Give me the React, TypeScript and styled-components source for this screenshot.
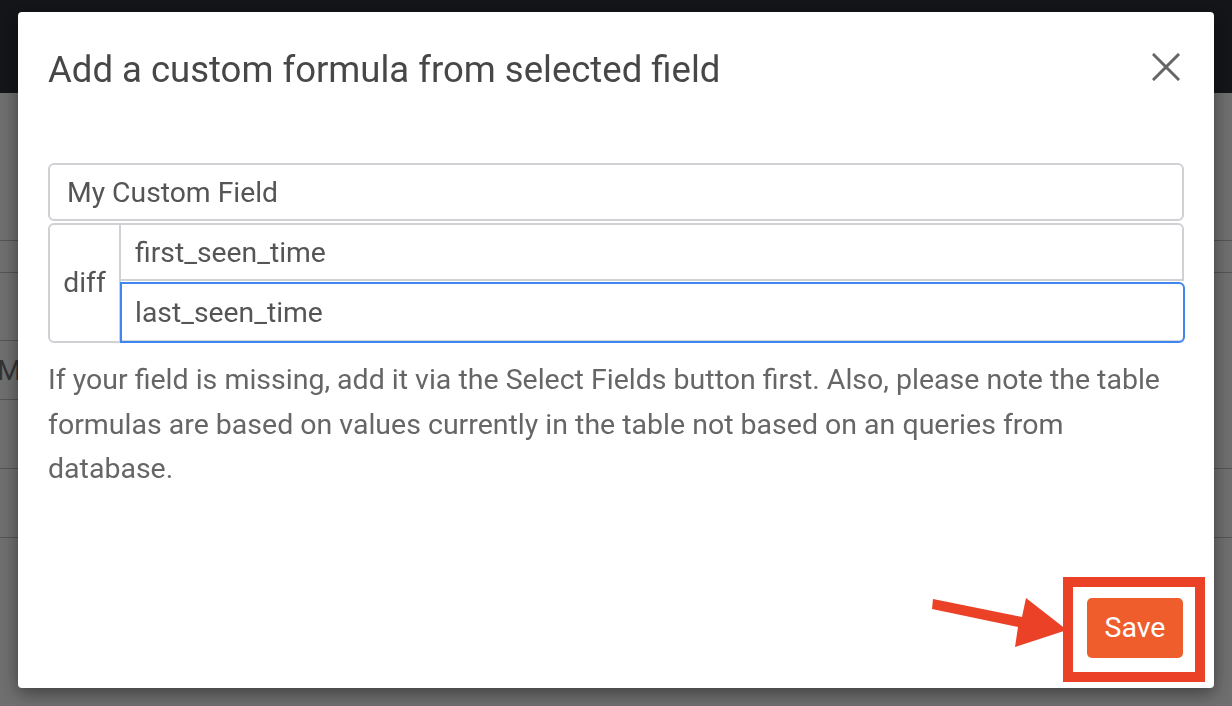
import React from 'react';
import styled, { createGlobalStyle } from 'styled-components';

const GlobalStyle = createGlobalStyle`
  html, body {
    margin: 0;
    padding: 0;
    width: 100%;
    height: 100%;
    overflow: hidden;
    font-family: Roboto, 'Liberation Sans', Arial, sans-serif;
    background: #dedede;
  }
  * { box-sizing: border-box; }
`;

const Page = styled.div`
  width: 1232px;
  height: 706px;
  display: flex;
  flex-direction: column;
  background: #dfdfdf;
`;

const NavBar = styled.div`
  height: 93px;
  background: #272b31;
  flex-shrink: 0;
`;

const TableArea = styled.div`
  padding-top: 147px;
  display: flex;
  flex-direction: column;
`;

const TableRow = styled.div<{ h: number; full?: boolean }>`
  height: ${({ h }) => h}px;
  border-top: 1px solid #a9a9a9;
  width: ${({ full }) => (full ? '100%' : '40%')};
  display: flex;
  align-items: center;
  font-size: 28px;
  color: #666;
`;

const CellText = styled.span`
  margin-left: -3px;
`;

const Backdrop = styled.div`
  position: fixed;
  inset: 0;
  background: rgba(0, 0, 0, 0.5);
`;

const Modal = styled.div`
  position: fixed;
  top: 12px;
  left: 18px;
  width: 1196px;
  height: 676px;
  background: #fff;
  border-radius: 4px;
  box-shadow: 0 5px 18px rgba(0, 0, 0, 0.45);
  display: flex;
  flex-direction: column;
`;

const Header = styled.div`
  display: flex;
  align-items: center;
  justify-content: space-between;
  padding: 30px 34px 0 30px;
`;

const Title = styled.h4`
  margin: 0;
  font-size: 36.5px;
  line-height: 56px;
  font-weight: 400;
  color: #474747;
`;

const CloseButton = styled.button`
  border: none;
  background: transparent;
  padding: 0;
  margin-top: -6px;
  width: 28px;
  height: 28px;
  display: flex;
  cursor: pointer;
`;

const Body = styled.div`
  padding: 65px 30px 0 30px;
  display: flex;
  flex-direction: column;
`;

const TextInput = styled.div<{ pad?: number }>`
  height: 58px;
  border: 2px solid #cfd1d4;
  border-radius: 6px;
  display: flex;
  align-items: center;
  padding-left: ${({ pad }) => pad ?? 17}px;
  font-size: 28.3px;
  color: #555;
`;

const InputGroup = styled.div`
  margin-top: 2px;
  display: flex;
  height: 120px;
`;

const Addon = styled.div`
  width: 73px;
  border: 2px solid #cfd1d4;
  border-radius: 6px 0 0 6px;
  display: flex;
  align-items: center;
  justify-content: center;
  font-size: 28.3px;
  color: #555;
  padding-bottom: 1px;
`;

const Stack = styled.div`
  flex: 1;
  display: flex;
  flex-direction: column;
`;

const StackInput = styled.div<{ focused?: boolean }>`
  height: ${({ focused }) => (focused ? 61 : 58)}px;
  margin-left: ${({ focused }) => (focused ? -1 : 0)}px;
  margin-right: ${({ focused }) => (focused ? -1 : 0)}px;
  margin-top: ${({ focused }) => (focused ? 1 : 0)}px;
  border: 2px solid ${({ focused }) => (focused ? '#3f86ee' : '#cfd1d4')};
  border-left-width: ${({ focused }) => (focused ? 2 : 0)}px;
  border-radius: ${({ focused }) => (focused ? '0 6px 6px 0' : '0 6px 0 0')};
  box-shadow: ${({ focused }) => (focused ? 'inset 0 -1px 0 #d5d7da' : 'none')};
  display: flex;
  align-items: center;
  padding-left: ${({ focused }) => (focused ? 13 : 14)}px;
  font-size: 28.3px;
  color: #555;
`;

const HelpText = styled.p`
  margin: 15px 0 0 0;
  font-size: 28.5px;
  line-height: 44.5px;
  color: #666;
`;

const Footer = styled.div`
  margin-top: auto;
  display: flex;
  justify-content: flex-end;
  padding: 0 31px 30px 0;
`;

const SaveWrap = styled.div`
  position: relative;

  &::after {
    content: '';
    position: absolute;
    top: -21px;
    left: -24px;
    right: -22px;
    bottom: -24px;
    border: 10px solid #ea4127;
    pointer-events: none;
  }
`;

const SaveButton = styled.button`
  width: 96px;
  height: 60px;
  border: none;
  border-radius: 5px;
  background: #ef5d2d;
  color: #fff;
  font-family: Roboto, 'Liberation Sans', Arial, sans-serif;
  font-size: 28.5px;
  padding: 0 0 2px 0;
  cursor: pointer;
`;

const Arrow = styled.svg`
  position: absolute;
  left: -157px;
  top: -2px;
  overflow: visible;
`;

export default function App() {
  return (
    <>
      <GlobalStyle />
      <Page>
        <NavBar />
        <TableArea>
          <TableRow h={32} full />
          <TableRow h={68} full />
          <TableRow h={59}>
            <CellText>M</CellText>
          </TableRow>
          <TableRow h={69} />
          <TableRow h={69} full />
          <TableRow h={60} full />
        </TableArea>
      </Page>
      <Backdrop />
      <Modal>
        <Header>
          <Title>Add a custom formula from selected field</Title>
          <CloseButton aria-label="Close">
            <svg width="28" height="28" viewBox="0 0 28 28">
              <path d="M2 2 L26 26 M26 2 L2 26" stroke="#666" strokeWidth="3" strokeLinecap="square" />
            </svg>
          </CloseButton>
        </Header>
        <Body>
          <TextInput>My Custom Field</TextInput>
          <InputGroup>
            <Addon>diff</Addon>
            <Stack>
              <StackInput>first_seen_time</StackInput>
              <StackInput focused>last_seen_time</StackInput>
            </Stack>
          </InputGroup>
          <HelpText>
            If your field is missing, add it via the Select Fields button first. Also, please note the table
            formulas are based on values currently in the table not based on an queries from database.
          </HelpText>
        </Body>
        <Footer>
          <SaveWrap>
            <Arrow width="138" height="53" viewBox="0 0 138 53">
              <polygon points="3,3 92,21 96,2 137,34 85,51 88,31 2,13" fill="#ea4127" />
            </Arrow>
            <SaveButton>Save</SaveButton>
          </SaveWrap>
        </Footer>
      </Modal>
    </>
  );
}
